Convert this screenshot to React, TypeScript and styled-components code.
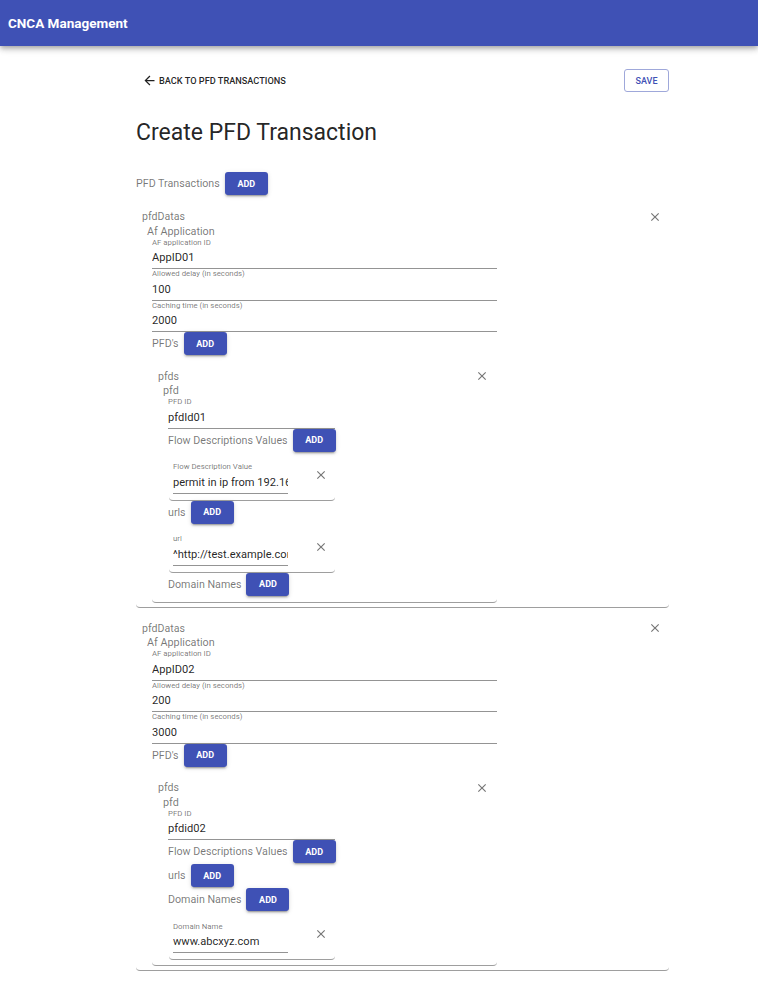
import React from 'react';
import styled, { createGlobalStyle } from 'styled-components';

type Pfd = {
  id: string;
  flows: string[];
  urls: string[];
  domains: string[];
};

type PfdData = {
  appId: string;
  delay: string;
  caching: string;
  pfds: Pfd[];
};

const pfdDatas: PfdData[] = [
  {
    appId: 'AppID01',
    delay: '100',
    caching: '2000',
    pfds: [
      {
        id: 'pfdId01',
        flows: ['permit in ip from 192.168.1.1 to 10.10.10.10'],
        urls: ['^http://test.example.com(/\\S*)?$'],
        domains: [],
      },
    ],
  },
  {
    appId: 'AppID02',
    delay: '200',
    caching: '3000',
    pfds: [
      {
        id: 'pfdid02',
        flows: [],
        urls: [],
        domains: ['www.abcxyz.com'],
      },
    ],
  },
];

const GlobalStyle = createGlobalStyle`
  * { box-sizing: border-box; }
  body {
    margin: 0;
    background: #fff;
    font-family: Roboto, "Helvetica Neue", Arial, sans-serif;
    color: rgba(0, 0, 0, 0.87);
  }
`;

const Toolbar = styled.header`
  display: flex;
  align-items: center;
  height: 46px;
  padding: 0 8px;
  background: #3f51b5;
  color: #fff;
  box-shadow: 0 2px 4px -1px rgba(0, 0, 0, 0.2), 0 4px 5px 0 rgba(0, 0, 0, 0.14),
    0 1px 10px 0 rgba(0, 0, 0, 0.12);
`;

const ToolbarTitle = styled.span`
  font-size: 13.5px;
  font-weight: 700;
`;

const Page = styled.main`
  width: 533px;
  margin-left: 136px;
  padding-bottom: 20px;
`;

const TopBar = styled.div`
  display: flex;
  align-items: center;
  justify-content: space-between;
  height: 23px;
  margin-top: 23px;
`;

const BackButton = styled.button`
  display: flex;
  align-items: center;
  gap: 2px;
  padding: 0 0 0 6px;
  border: 0;
  background: none;
  font-family: inherit;
  font-size: 9.2px;
  font-weight: 500;
  color: rgba(0, 0, 0, 0.87);
  cursor: pointer;

  svg {
    width: 15px;
    height: 15px;
  }
`;

const SaveButton = styled.button`
  width: 45px;
  height: 23px;
  border: 1px solid #9fa8da;
  border-radius: 3px;
  background: #fff;
  font-family: inherit;
  font-size: 9px;
  font-weight: 500;
  color: #3f51b5;
`;

const Title = styled.h1`
  margin: 26.5px 0 0;
  font-size: 23px;
  font-weight: 400;
  line-height: 27px;
`;

const ArrayRow = styled.div<{ $top?: number }>`
  display: flex;
  align-items: flex-start;
  gap: 5px;
  height: 24px;
  margin-top: ${({ $top }) => $top ?? 0}px;
`;

const RowLabel = styled.span`
  font-size: 10.7px;
  line-height: 23px;
  color: rgba(0, 0, 0, 0.54);
`;

const AddButton = styled.button`
  width: 43px;
  height: 23px;
  border: 0;
  border-radius: 3px;
  background: #3f51b5;
  color: #fff;
  font-family: inherit;
  font-size: 9px;
  font-weight: 700;
  box-shadow: 0 3px 1px -2px rgba(0, 0, 0, 0.2), 0 2px 2px 0 rgba(0, 0, 0, 0.14),
    0 1px 5px 0 rgba(0, 0, 0, 0.12);
`;

const DataCard = styled.section`
  padding: 14px 7px 4px 6px;
  border-bottom: 1px solid #9e9e9e;
  border-radius: 4px;
`;

const PfdsCard = styled.section`
  width: 345px;
  margin-top: 7.5px;
  padding: 6px 8px 5px 6px;
  border-bottom: 1px solid #9e9e9e;
  border-radius: 4px;
`;

const ItemCard = styled.div`
  display: flex;
  align-items: flex-start;
  justify-content: space-between;
  width: 166px;
  margin-left: 1px;
  padding: 9.5px 7px 6px 4px;
  border-bottom: 1px solid #9e9e9e;
  border-radius: 4px;
`;

const CardHeader = styled.div`
  display: flex;
  align-items: center;
  justify-content: space-between;
  height: 13px;
`;

const GroupLabel = styled.span`
  font-size: 10.6px;
  line-height: 13px;
  color: rgba(0, 0, 0, 0.54);
`;

const SectionTitle = styled.div`
  margin: 2.5px 0 0 5px;
  font-size: 10.8px;
  line-height: 12px;
  color: rgba(0, 0, 0, 0.54);
`;

const Indent = styled.div`
  margin-left: 10px;
`;

const Field = styled.div<{ $width: number }>`
  width: ${({ $width }) => $width}px;
`;

const FieldLabel = styled.div`
  font-size: 7.8px;
  line-height: 9px;
  color: rgba(0, 0, 0, 0.54);
  white-space: nowrap;
`;

const FieldValue = styled.div`
  margin-top: 4.5px;
  padding-bottom: 3px;
  border-bottom: 1px solid rgba(0, 0, 0, 0.42);
  font-size: 11.1px;
  line-height: 14px;
  white-space: nowrap;
  overflow: hidden;
`;

const CloseButton = styled.button<{ $top?: number }>`
  display: flex;
  width: 14px;
  height: 14px;
  margin-top: ${({ $top }) => $top ?? 0}px;
  padding: 0;
  border: 0;
  background: none;
  color: rgba(0, 0, 0, 0.54);

  svg {
    width: 14px;
    height: 14px;
  }
`;

const CloseIcon = ({ top }: { top?: number }) => (
  <CloseButton $top={top} aria-label="remove">
    <svg viewBox="0 0 24 24" fill="currentColor">
      <path d="M19 6.41L17.59 5 12 10.59 6.41 5 5 6.41 10.59 12 5 17.59 6.41 19 12 13.41 17.59 19 19 17.59 13.41 12z" />
    </svg>
  </CloseButton>
);

const TextField = ({ label, value, width }: { label: string; value: string; width: number }) => (
  <Field $width={width}>
    <FieldLabel>{label}</FieldLabel>
    <FieldValue>{value}</FieldValue>
  </Field>
);

const AddRow = ({ label, top }: { label: string; top?: number }) => (
  <ArrayRow $top={top}>
    <RowLabel>{label}</RowLabel>
    <AddButton>ADD</AddButton>
  </ArrayRow>
);

const ItemList = ({ label, items }: { label: string; items: string[] }) => (
  <>
    {items.map((item, i) => (
      <ItemCard key={i}>
        <TextField label={label} value={item} width={115} />
        <CloseIcon top={5.5} />
      </ItemCard>
    ))}
  </>
);

const PfdBlock = ({ pfd }: { pfd: Pfd }) => (
  <PfdsCard>
    <CardHeader>
      <GroupLabel>pfds</GroupLabel>
      <CloseIcon />
    </CardHeader>
    <SectionTitle>pfd</SectionTitle>
    <Indent>
      <TextField label="PFD ID" value={pfd.id} width={167} />
      <AddRow label="Flow Descriptions Values" />
      <ItemList label="Flow Description Value" items={pfd.flows} />
      <AddRow label="urls" />
      <ItemList label="url" items={pfd.urls} />
      <AddRow label="Domain Names" />
      <ItemList label="Domain Name" items={pfd.domains} />
    </Indent>
  </PfdsCard>
);

const DataBlock = ({ data }: { data: PfdData }) => (
  <DataCard>
    <CardHeader>
      <GroupLabel>pfdDatas</GroupLabel>
      <CloseIcon />
    </CardHeader>
    <SectionTitle>Af Application</SectionTitle>
    <Indent>
      <TextField label="AF application ID" value={data.appId} width={345} />
      <TextField label="Allowed delay (in seconds)" value={data.delay} width={345} />
      <TextField label="Caching time (in seconds)" value={data.caching} width={345} />
      <AddRow label="PFD's" />
      {data.pfds.map((pfd) => (
        <PfdBlock key={pfd.id} pfd={pfd} />
      ))}
    </Indent>
  </DataCard>
);

const App = () => {
  return (
    <>
      <GlobalStyle />
      <Toolbar>
        <ToolbarTitle>CNCA Management</ToolbarTitle>
      </Toolbar>
      <Page>
        <TopBar>
          <BackButton>
            <svg viewBox="0 0 24 24" fill="currentColor">
              <path d="M20 11H7.83l5.59-5.59L12 4l-8 8 8 8 1.41-1.41L7.83 13H20v-2z" />
            </svg>
            BACK TO PFD TRANSACTIONS
          </BackButton>
          <SaveButton>SAVE</SaveButton>
        </TopBar>
        <Title>Create PFD Transaction</Title>
        <AddRow label="PFD Transactions" top={26.5} />
        {pfdDatas.map((data) => (
          <DataBlock key={data.appId} data={data} />
        ))}
      </Page>
    </>
  );
};

export default App;
